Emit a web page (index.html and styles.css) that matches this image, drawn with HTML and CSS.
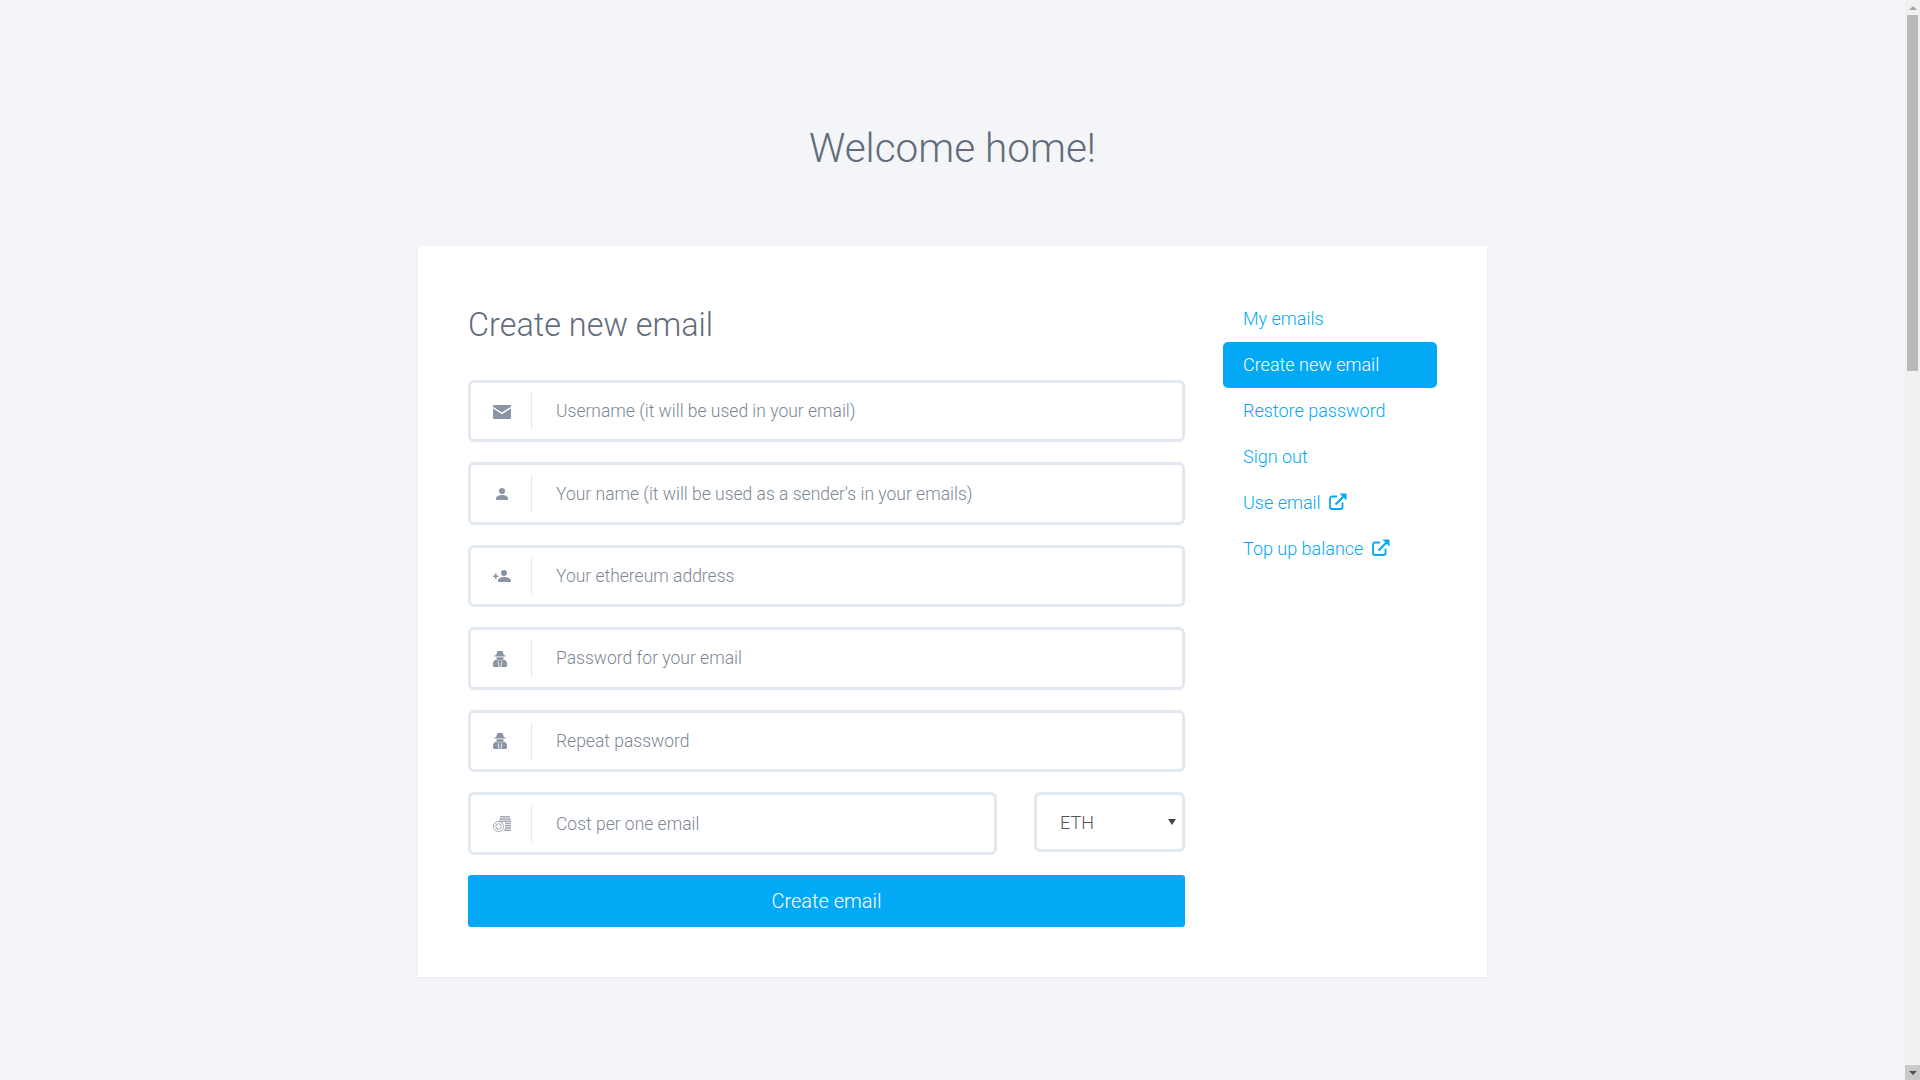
FILE: index.html
```html
<!DOCTYPE html>
<html>
<head>
	<title>Create new email</title>
	<link rel="stylesheet" href="styles.css">
</head>
<body>
	<div id="page">
		<h1 id="welcome">Welcome home!</h1>
		<div id="card">
			<form id="create_form">
				<h2>Create new email</h2>
				<div class="field">
					<div class="field_icon">
						<svg width="18" height="14" viewBox="0 0 18 14"><path d="M1.2 0h15.6c.7 0 1.2.5 1.2 1.2v.5L9 7.6 0 1.700v-.5C0 .5.500 0 1.200 0z"/><path d="M0 3.400l9 5.900 9-5.900v9.400c0 .7-.5 1.200-1.200 1.200H1.200C.5 14 0 13.500 0 12.800z"/></svg>
					</div>
					<input type="text" placeholder="Username (it will be used in your email)">
				</div>
				<div class="field">
					<div class="field_icon">
						<svg width="12" height="12" viewBox="0 0 12 12"><circle cx="6" cy="3" r="3"/><path d="M0 12v-1.500C0 8.400 3 7 6 7s6 1.400 6 3.500V12z"/></svg>
					</div>
					<input type="text" placeholder="Your name (it will be used as a sender's in your emails)">
				</div>
				<div class="field">
					<div class="field_icon">
						<svg width="18" height="12" viewBox="0 0 18 12"><circle cx="11" cy="3" r="3"/><path d="M5 12v-1.500C5 8.400 8 7 11 7s7 1.400 7 3.500V12z"/><path d="M2 3.500h1.500V5.500H5.500V7H3.500V9H2V7H0V5.500H2z"/></svg>
					</div>
					<input type="text" placeholder="Your ethereum address">
				</div>
				<div class="field">
					<div class="field_icon shift">
						<svg width="14" height="16" viewBox="0 0 14 16"><path d="M4.500 0h5l1.500 4.200h1.500v1.200h-11V4.200H3z"/><path d="M3.500 6.200h7v1.500C10.500 8.700 9.500 9.200 7 9.200S3.500 8.700 3.500 7.700z"/><path d="M3 8.700C4 9.700 10 9.700 11 8.700 12.800 9.200 14 10.500 14 12.500V14.500c0 .9-.6 1.500-1.500 1.500H1.500C.6 16 0 15.400 0 14.500V12.500C0 10.500 1.200 9.200 3 8.700z"/><path class="tie" d="M5.200 10.500l.8 5.500M8.800 10.500l-.8 5.500"/></svg>
					</div>
					<input type="password" placeholder="Password for your email">
				</div>
				<div class="field">
					<div class="field_icon shift">
						<svg width="14" height="16" viewBox="0 0 14 16"><path d="M4.500 0h5l1.500 4.200h1.500v1.200h-11V4.200H3z"/><path d="M3.500 6.200h7v1.500C10.500 8.700 9.500 9.200 7 9.200S3.500 8.700 3.500 7.700z"/><path d="M3 8.700C4 9.700 10 9.700 11 8.700 12.800 9.200 14 10.500 14 12.500V14.500c0 .9-.6 1.500-1.500 1.500H1.500C.6 16 0 15.400 0 14.500V12.500C0 10.500 1.200 9.200 3 8.700z"/><path class="tie" d="M5.200 10.500l.8 5.500M8.800 10.500l-.8 5.500"/></svg>
					</div>
					<input type="password" placeholder="Repeat password">
				</div>
				<div class="cost_row">
					<div class="field">
						<div class="field_icon">
							<svg width="18" height="16" viewBox="0 0 18 16" class="coins"><circle cx="5.500" cy="10.500" r="5" fill="none" stroke-width="1"/><circle cx="5.500" cy="10.500" r="2.700" fill="none" stroke-width="1"/><path d="M7 0h10v1.500H7zM6.500 2.300h11v1.500h-11zM6 4.500h12V6H6zM12 6.800h6v1.500h-6zM12 9h6v1.500h-6zM12 11.200h6v1.500h-6zM11 13.500h7V15h-7z" stroke="none"/></svg>
						</div>
						<input type="text" placeholder="Cost per one email">
					</div>
					<div id="currency_box">
						<select id="currency">
							<option>ETH</option>
						</select>
						<span id="currency_arrow"></span>
					</div>
				</div>
				<button type="button" id="create_button">Create email</button>
			</form>
			<div id="side_menu">
				<a href="#">My emails</a>
				<a href="#" class="active">Create new email</a>
				<a href="#">Restore password</a>
				<a href="#">Sign out</a>
				<a href="#">Use email
					<svg class="ext" width="18" height="17" viewBox="0 0 18 17"><path d="M8 3.500H3C1.900 3.500 1 4.400 1 5.500V14c0 1.100.9 2 2 2h8.500c1.100 0 2-.9 2-2V9.500" fill="none" stroke-width="1.800"/><path d="M6.500 11.500L15 3" fill="none" stroke-width="2.200"/><path d="M10.500 0.500H17.500V7.500z" stroke="none"/></svg>
				</a>
				<a href="#">Top up balance
					<svg class="ext" width="18" height="17" viewBox="0 0 18 17"><path d="M8 3.500H3C1.900 3.500 1 4.400 1 5.500V14c0 1.100.9 2 2 2h8.500c1.100 0 2-.9 2-2V9.500" fill="none" stroke-width="1.800"/><path d="M6.500 11.500L15 3" fill="none" stroke-width="2.200"/><path d="M10.500 0.500H17.500V7.500z" stroke="none"/></svg>
				</a>
			</div>
		</div>
	</div>
	<div id="scrollbar">
		<div class="scroll_btn"><span class="arrow_up"></span></div>
		<div id="scroll_track"><div id="scroll_thumb"></div></div>
		<div class="scroll_btn down"><span class="arrow_down"></span></div>
	</div>
</body>
</html>
```
FILE: styles.css
```css
*{
	box-sizing: border-box;
}
html, body
{
	height: 100%;
}
body
{
	margin: 0px;
	display: flex;
	overflow: hidden;
	background-color: #f3f5f9;
	color: #626c7a;
	font-family: Roboto, "Liberation Sans", sans-serif;
	font-weight: 300;
}
#page
{
	flex: 1;
	min-width: 0;
}
#welcome
{
	margin: 0px;
	padding: 119px 0px 69px;
	line-height: 58px;
	font-size: 40.5px;
	font-weight: 300;
	text-align: center;
}
#card
{
	display: flex;
	gap: 38px;
	width: 1069px;
	margin: 0px auto;
	padding: 50px;
	background-color: #fff;
	box-shadow: 0px 1px 2px rgba(60, 70, 90, 0.08);
}
#create_form
{
	width: 717px;
}
h2
{
	margin: 0px 0px 27px;
	padding-top: 1px;
	line-height: 56px;
	font-size: 32.4px;
	font-weight: 300;
}
.field
{
	display: flex;
	align-items: center;
	height: 62.4px;
	margin-bottom: 20px;
	border: 3px solid #e1e8ef;
	border-radius: 6px;
	background-color: #fff;
}
.field_icon
{
	display: flex;
	justify-content: center;
	align-items: center;
	flex: none;
	width: 61px;
	height: 38px;
	padding-left: 2px;
	padding-top: 1px;
	border-right: 1px solid #e5e8ec;
	fill: #8995a5;
	stroke: #8995a5;
	stroke-width: 0;
}
.field_icon.shift
{
	padding-left: 0px;
	padding-right: 2px;
}
.tie
{
	fill: none;
	stroke: #fff;
	stroke-width: 0.8;
}
.field input
{
	flex: 1;
	min-width: 0;
	height: 100%;
	padding: 0px 24px;
	border: none;
	outline: none;
	background: none;
	font-family: inherit;
	font-size: 17.5px;
	font-weight: 300;
	color: #5a6270;
}
.field input::placeholder
{
	color: #7c8795;
	opacity: 1;
}
.coins
{
	opacity: 0.8;
}
.cost_row
{
	display: flex;
	align-items: flex-start;
	gap: 37px;
}
.cost_row .field
{
	flex: 1;
	height: 63.4px;
}
#currency_box
{
	position: relative;
	flex: none;
	width: 151px;
}
#currency
{
	display: block;
	width: 100%;
	height: 60px;
	padding: 2px 0px 0px 23px;
	border: 3px solid #e1e8ef;
	border-radius: 6px;
	outline: none;
	appearance: none;
	background-color: #fff;
	color: #555;
	font-family: inherit;
	font-size: 18px;
	font-weight: 300;
}
#currency_arrow
{
	position: absolute;
	top: 27px;
	right: 9px;
	border-left: 4px solid transparent;
	border-right: 4px solid transparent;
	border-top: 6px solid #444;
}
#create_button
{
	display: block;
	width: 100%;
	height: 52px;
	border: none;
	border-radius: 3px;
	background-color: #03a9f4;
	color: #fff;
	font-family: inherit;
	font-size: 20px;
	font-weight: 300;
}
#side_menu
{
	flex: none;
	width: 214px;
}
#side_menu a
{
	display: block;
	height: 46px;
	padding: 0px 20px;
	border-radius: 5px;
	line-height: 46px;
	font-size: 18px;
	color: #03a9f4;
	text-decoration: none;
}
#side_menu a.active
{
	background-color: #03a9f4;
	color: #fff;
}
.ext
{
	margin-left: 4px;
	vertical-align: -1px;
	fill: #03a9f4;
	stroke: #03a9f4;
}
#scrollbar
{
	display: flex;
	flex-direction: column;
	flex: none;
	width: 15px;
	height: 100%;
	background-color: #f1f1f1;
}
.scroll_btn
{
	display: flex;
	justify-content: center;
	align-items: center;
	flex: none;
	height: 15px;
}
.scroll_btn.down
{
	background-color: #c9c9c9;
}
.arrow_up
{
	border-left: 4px solid transparent;
	border-right: 4px solid transparent;
	border-bottom: 4px solid #a3a3a3;
}
.arrow_down
{
	border-left: 4px solid transparent;
	border-right: 4px solid transparent;
	border-top: 4px solid #505050;
}
#scroll_track
{
	flex: 1;
	padding: 0px 2px;
}
#scroll_thumb
{
	height: 356px;
	background-color: #b9b9b9;
}
```
